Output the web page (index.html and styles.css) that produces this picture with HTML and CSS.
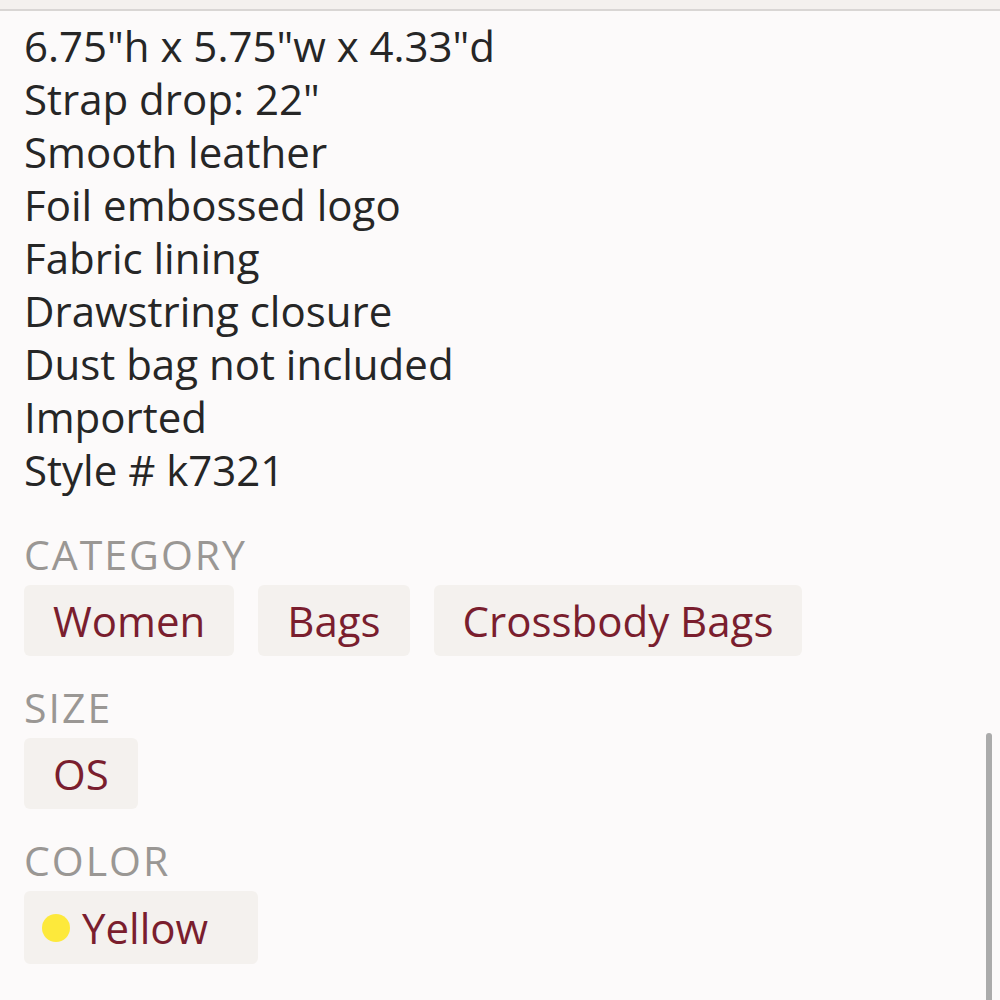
FILE: index.html
```html
<!DOCTYPE html>
<html lang="en">
<head>
  <meta charset="UTF-8">
  <title>Product details</title>
  <link rel="stylesheet" href="styles.css">
</head>
<body>
  <div class="topbar"></div>

  <div class="details">
    <!-- product specs -->
    <ul class="specs">
      <li>6.75"h x 5.75"w x 4.33"d</li>
      <li>Strap drop: 22"</li>
      <li>Smooth leather</li>
      <li>Foil embossed logo</li>
      <li>Fabric lining</li>
      <li>Drawstring closure</li>
      <li>Dust bag not included</li>
      <li>Imported</li>
      <li>Style # k7321</li>
    </ul>

    <div class="group">
      <h2>CATEGORY</h2>
      <div class="chips">
        <span class="chip">Women</span>
        <span class="chip">Bags</span>
        <span class="chip">Crossbody Bags</span>
      </div>
    </div>

    <div class="group">
      <h2>SIZE</h2>
      <div class="chips">
        <span class="chip">OS</span>
      </div>
    </div>

    <div class="group">
      <h2>COLOR</h2>
      <div class="chips">
        <span class="chip color"><span class="dot"></span>Yellow</span>
      </div>
    </div>
  </div>

  <div class="scrollbar"></div>
</body>
</html>
```

FILE: styles.css
```css
html, body { margin: 0; padding: 0; }
body { background: #fcfafa; font-family: "Open Sans", "Noto Sans", sans-serif; color: #262626; height: 1000px; overflow: hidden; }
.topbar { height: 9px; background: #f4f1ee; border-bottom: 2px solid #d9d6d4; }
.details { padding: 8px 24px 0; }
.specs { list-style: none; margin: 0; padding: 0; font-size: 42px; line-height: 53px; }
.group { margin-top: 30px; }
.specs + .group { margin-top: 37px; }
h2 { margin: 0 0 10px; font-size: 41px; line-height: 42px; font-weight: 400; letter-spacing: 2px; color: #9a9794; }
.chips { display: flex; gap: 24px; }
.chip { display: flex; align-items: center; height: 71px; padding: 0 29px; background: #f4f1ee; border-radius: 6px; color: #7a1e2e; font-size: 42px; box-sizing: border-box; }
.chip.color { height: 73px; padding: 0 50px 0 18px; }
.dot { width: 28px; height: 28px; border-radius: 50%; background: #fde93b; margin-right: 12px; }
.scrollbar { position: absolute; right: 8px; top: 733px; width: 6px; height: 280px; border-radius: 3px; background: #ababab; }
```
